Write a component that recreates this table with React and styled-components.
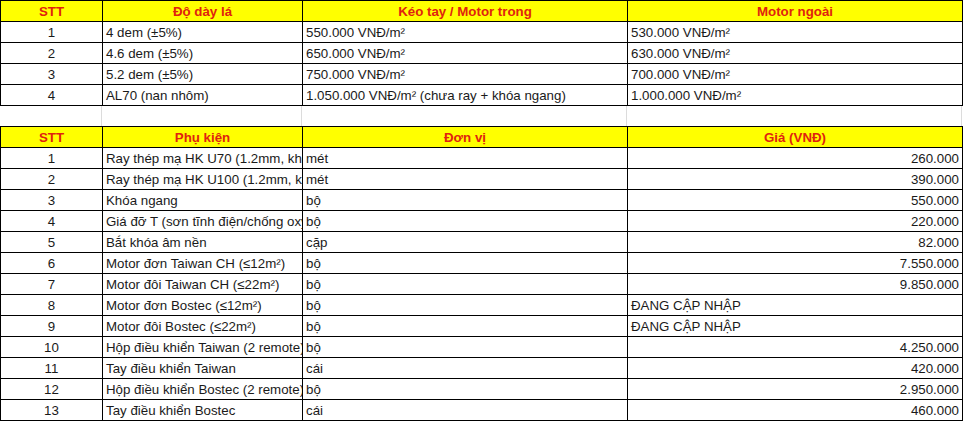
import React from 'react';
import styled, { createGlobalStyle } from 'styled-components';

const GlobalStyle = createGlobalStyle`
  html, body {
    margin: 0;
    padding: 0;
    background: #fff;
  }
  body {
    font-family: Arial, "Liberation Sans", sans-serif;
    font-size: 13.3px;
    color: #1a1a1a;
  }
`;

const COLS = [102, 200, 325, 335];
const TOTAL = COLS.reduce((a, b) => a + b, 0);

const Sheet = styled.div`
  width: 965px;
  display: flex;
  flex-direction: column;
`;

const Table = styled.table`
  border-collapse: collapse;
  table-layout: fixed;
  width: ${TOTAL}px;
`;

const HeadCell = styled.th`
  background: #ffff00;
  color: #e0230f;
  font-weight: bold;
  font-size: 13.3px;
  text-align: center;
  border: 1px solid #000;
  height: 19px;
  padding: 0 3px 1px;
  vertical-align: bottom;
  white-space: nowrap;
  overflow: hidden;
  line-height: 17px;
`;

const Cell = styled.td`
  border: 1px solid #000;
  height: 19px;
  padding: 0 3px 1px;
  vertical-align: bottom;
  white-space: nowrap;
  overflow: hidden;
  text-overflow: clip;
  text-align: ${(p) => p.$align || 'left'};
  line-height: 17px;
`;

const Gap = styled.div`
  height: 20px;
  display: grid;
  grid-template-columns: ${COLS.map((c) => `${c}px`).join(' ')};
  width: ${TOTAL}px;
`;

const GapLine = styled.div`
  border-right: 1px solid #dcdcdc;
`;

const thickness = [
  ['1', '4 dem (±5%)', '550.000 VNĐ/m²', '530.000 VNĐ/m²'],
  ['2', '4.6 dem (±5%)', '650.000 VNĐ/m²', '630.000 VNĐ/m²'],
  ['3', '5.2 dem (±5%)', '750.000 VNĐ/m²', '700.000 VNĐ/m²'],
  ['4', 'AL70 (nan nhôm)', '1.050.000 VNĐ/m² (chưa ray + khóa ngang)', '1.000.000 VNĐ/m²'],
];

const accessories = [
  ['1', 'Ray thép mạ HK U70 (1.2mm, không gỉ)', 'mét', '260.000'],
  ['2', 'Ray thép mạ HK U100 (1.2mm, không gỉ)', 'mét', '390.000'],
  ['3', 'Khóa ngang', 'bộ', '550.000'],
  ['4', 'Giá đỡ T (sơn tĩnh điện/chống oxy hóa)', 'bộ', '220.000'],
  ['5', 'Bắt khóa âm nền', 'cặp', '82.000'],
  ['6', 'Motor đơn Taiwan CH (≤12m²)', 'bộ', '7.550.000'],
  ['7', 'Motor đôi Taiwan CH (≤22m²)', 'bộ', '9.850.000'],
  ['8', 'Motor đơn Bostec (≤12m²)', 'bộ', 'ĐANG CẬP NHẬP'],
  ['9', 'Motor đôi Bostec (≤22m²)', 'bộ', 'ĐANG CẬP NHẬP'],
  ['10', 'Hộp điều khiển Taiwan (2 remote)', 'bộ', '4.250.000'],
  ['11', 'Tay điều khiển Taiwan', 'cái', '420.000'],
  ['12', 'Hộp điều khiển Bostec (2 remote)', 'bộ', '2.950.000'],
  ['13', 'Tay điều khiển Bostec', 'cái', '460.000'],
];

const Cols = () => (
  <colgroup>
    {COLS.map((w, i) => (
      <col key={i} style={{ width: w }} />
    ))}
  </colgroup>
);

const App = () => (
  <>
    <GlobalStyle />
    <Sheet>
      <Table>
        <Cols />
        <thead>
          <tr>
            <HeadCell>STT</HeadCell>
            <HeadCell>Độ dày lá</HeadCell>
            <HeadCell>Kéo tay / Motor trong</HeadCell>
            <HeadCell>Motor ngoài</HeadCell>
          </tr>
        </thead>
        <tbody>
          {thickness.map((r) => (
            <tr key={r[0]}>
              <Cell $align="center">{r[0]}</Cell>
              <Cell>{r[1]}</Cell>
              <Cell>{r[2]}</Cell>
              <Cell>{r[3]}</Cell>
            </tr>
          ))}
        </tbody>
      </Table>
      <Gap>
        <GapLine />
        <GapLine />
        <GapLine />
        <GapLine />
      </Gap>
      <Table>
        <Cols />
        <thead>
          <tr>
            <HeadCell>STT</HeadCell>
            <HeadCell>Phụ kiện</HeadCell>
            <HeadCell>Đơn vị</HeadCell>
            <HeadCell>Giá (VNĐ)</HeadCell>
          </tr>
        </thead>
        <tbody>
          {accessories.map((r) => {
            const pending = r[3].startsWith('ĐANG');
            return (
              <tr key={r[0]}>
                <Cell $align="center">{r[0]}</Cell>
                <Cell>{r[1]}</Cell>
                <Cell>{r[2]}</Cell>
                <Cell $align={pending ? 'left' : 'right'}>{r[3]}</Cell>
              </tr>
            );
          })}
        </tbody>
      </Table>
    </Sheet>
  </>
);

export default App;
